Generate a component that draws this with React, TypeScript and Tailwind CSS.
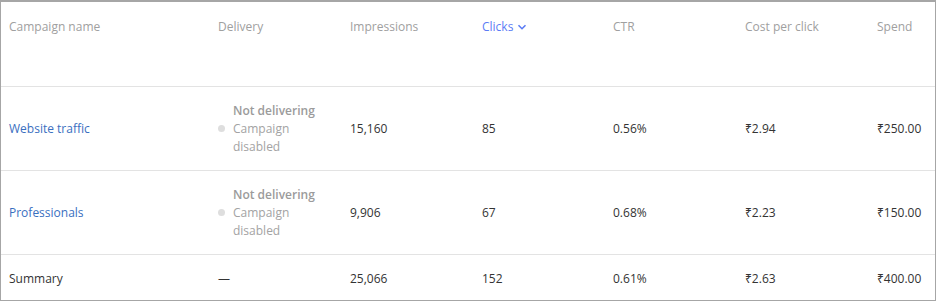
const cols = "grid grid-cols-[209px_132px_132px_131px_132px_132px_1fr]";

type Row = {
  name: string;
  impressions: string;
  clicks: string;
  ctr: string;
  cpc: string;
  spend: string;
};

const rows: Row[] = [
  { name: "Website traffic", impressions: "15,160", clicks: "85", ctr: "0.56%", cpc: "₹2.94", spend: "₹250.00" },
  { name: "Professionals", impressions: "9,906", clicks: "67", ctr: "0.68%", cpc: "₹2.23", spend: "₹150.00" },
];

function Delivery() {
  return (
    <div className="flex items-center gap-[8px]">
      <span className="size-[7px] rounded-full bg-[#dedede] shrink-0" />
      <div className="w-[94px] leading-[18px]">
        <div className="font-semibold text-[#9b9b9b]">Not delivering</div>
        <div className="text-[#a3a3a3]">Campaign disabled</div>
      </div>
    </div>
  );
}

export default function App() {
  return (
    <div
      className="w-[937px] h-[302px] bg-white text-[12px] text-[#333]"
      style={{ fontFamily: '"Open Sans", "Noto Sans", sans-serif' }}
    >
      <div className="w-[936px] h-[301px] border border-t-2 border-[#a6a6a6] flex flex-col">
        <div className={`${cols} h-[85px] border-b border-[#e3e3e3] text-[#a0a0a0] pt-[16px]`}>
          <div className="pl-[8px]">Campaign name</div>
          <div className="pl-[8px]">Delivery</div>
          <div className="pl-[8px]">Impressions</div>
          <div className="pl-[8px] text-[#5b7cf5] flex items-start gap-[4px]">
            Clicks
            <svg viewBox="0 0 10 10" className="size-[10px] mt-[4px]" fill="none" stroke="currentColor" strokeWidth="1.6">
              <path d="M1.5 3.2 5 6.7 8.5 3.2" />
            </svg>
          </div>
          <div className="pl-[8px]">CTR</div>
          <div className="pl-[8px]">Cost per click</div>
          <div className="pl-[8px]">Spend</div>
        </div>
        {rows.map((r) => (
          <div key={r.name} className={`${cols} h-[84px] border-b border-[#e3e3e3] items-center`}>
            <div className="pl-[8px] text-[#3a6fbf]">{r.name}</div>
            <div className="pl-[8px]">
              <Delivery />
            </div>
            <div className="pl-[8px]">{r.impressions}</div>
            <div className="pl-[8px]">{r.clicks}</div>
            <div className="pl-[8px]">{r.ctr}</div>
            <div className="pl-[8px]">{r.cpc}</div>
            <div className="pl-[8px]">{r.spend}</div>
          </div>
        ))}
        <div className={`${cols} flex-1 items-center pt-[2px]`}>
          <div className="pl-[8px]">Summary</div>
          <div className="pl-[8px]">—</div>
          <div className="pl-[8px]">25,066</div>
          <div className="pl-[8px]">152</div>
          <div className="pl-[8px]">0.61%</div>
          <div className="pl-[8px]">₹2.63</div>
          <div className="pl-[8px]">₹400.00</div>
        </div>
      </div>
    </div>
  );
}
